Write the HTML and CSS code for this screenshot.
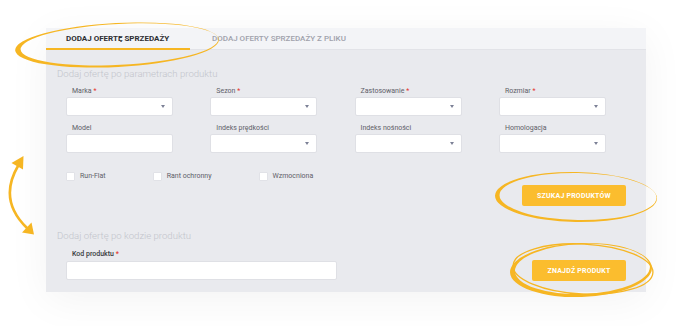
FILE: index.html
```html
<!DOCTYPE html>
<html lang="pl">
<head>
<meta charset="utf-8">
<title>Dodaj ofertę</title>
<link rel="stylesheet" href="styles.css">
</head>
<body>
<div class="page">
  <div class="panel">
    <div class="tabs">
      <div class="tab active">DODAJ OFERTĘ SPRZEDAŻY</div>
      <div class="tab">DODAJ OFERTY SPRZEDAŻY Z PLIKU</div>
    </div>
    <div class="panel-body">
      <h2 class="section-title">Dodaj ofertę po parametrach produktu</h2>
      <div class="fields">
        <div class="field"><label class="lbl">Marka <span class="req">*</span></label><div class="select"></div></div>
        <div class="field"><label class="lbl">Sezon <span class="req">*</span></label><div class="select"></div></div>
        <div class="field"><label class="lbl">Zastosowanie <span class="req">*</span></label><div class="select"></div></div>
        <div class="field"><label class="lbl">Rozmiar <span class="req">*</span></label><div class="select"></div></div>
        <div class="field"><label class="lbl">Model</label><div class="input"></div></div>
        <div class="field"><label class="lbl">Indeks prędkości</label><div class="select"></div></div>
        <div class="field"><label class="lbl">Indeks nośności</label><div class="select"></div></div>
        <div class="field"><label class="lbl">Homologacja</label><div class="select"></div></div>
      </div>
      <div class="checks">
        <div class="check"><span class="box"></span><span>Run-Flat</span></div>
        <div class="check"><span class="box"></span><span>Rant ochronny</span></div>
        <div class="check"><span class="box"></span><span>Wzmocniona</span></div>
      </div>
      <div class="actions"><button class="btn btn-search">SZUKAJ PRODUKTÓW</button></div>
      <h2 class="section-title second">Dodaj ofertę po kodzie produktu</h2>
      <div class="code-row">
        <div class="field code"><label class="lbl strong">Kod produktu <span class="req">*</span></label><div class="input"></div></div>
        <button class="btn btn-find">ZNAJDŹ PRODUKT</button>
      </div>
    </div>
  </div>
  <svg class="marks" width="677" height="326" viewBox="0 0 677 326">
    <g fill="#f6b623" fill-rule="evenodd">
      <path transform="rotate(-3 117 45)" d="M15,45 a102,22 0 1,0 204,0 a102,22 0 1,0 -204,0Z M20.5,44.5 a99,20.5 0 1,0 198,0 a99,20.5 0 1,0 -198,0Z"/>
      <path transform="rotate(1 576 197)" d="M495,197 a81,25 0 1,0 162,0 a81,25 0 1,0 -162,0Z M499.5,196.5 a78.5,23.5 0 1,0 157,0 a78.5,23.5 0 1,0 -157,0Z"/>
      <path transform="rotate(-2 581 270)" d="M510,270 a71,27 0 1,0 142,0 a71,27 0 1,0 -142,0Z M515,269 a67.5,25 0 1,0 135,0 a67.5,25 0 1,0 -135,0Z"/>
    </g>
    <ellipse cx="583" cy="269" rx="70" ry="25" transform="rotate(3 583 269)" fill="none" stroke="#f6b623" stroke-width="1.3"/>
    <g stroke="#f6b623" fill="none" stroke-width="2.6" stroke-linecap="round">
      <path d="M18,166 Q-2,200 27,228"/>
    </g>
    <g fill="#f6b623">
      <polygon points="23.5,156 11.5,163 23,169.5"/>
      <polygon points="34,234.5 22,232.5 31.5,222.5"/>
    </g>
  </svg>
</div>
</body>
</html>
```
FILE: styles.css
```css
* { box-sizing: border-box; }
html, body { margin: 0; padding: 0; background: #ffffff; }
body {
  width: 677px;
  height: 326px;
  overflow: hidden;
  font-family: Roboto, "Liberation Sans", sans-serif;
}
.page {
  position: relative;
  width: 677px;
  height: 326px;
  padding: 28px 0 0 46px;
}
.panel {
  width: 600px;
  background: #e9eaee;
  box-shadow: 0 8px 40px rgba(0, 0, 0, 0.05);
}
.tabs {
  display: flex;
  height: 22px;
  background: #f3f4f7;
  box-shadow: inset 0 -1px 0 #e2e3e8;
}
.tab {
  height: 22px;
  line-height: 22px;
  padding: 0 20px 0 22px;
  font-size: 8px;
  font-weight: 500;
  color: #9fa1ab;
  white-space: nowrap;
}
.tab.active {
  width: 144px;
  padding-left: 20px;
  padding-right: 0;
  color: #2e2f33;
  font-weight: 700;
  box-shadow: inset 0 -2px 0 #f6b623;
}
.panel-body {
  padding: 18px 20px 12px 11px;
}
.section-title {
  margin: 0;
  font-size: 9.6px;
  line-height: 12px;
  font-weight: 300;
  color: #c2c4cb;
}
.section-title.second { margin-top: 24px; }
.fields {
  margin-top: 7px;
  padding-left: 9px;
  display: grid;
  grid-template-columns: repeat(4, 107px);
  column-gap: 37.3px;
  row-gap: 8px;
}
.lbl {
  display: block;
  height: 9px;
  line-height: 9px;
  padding-left: 6px;
  margin-bottom: 1px;
  font-size: 7px;
  color: #5e6068;
}
.lbl.strong { color: #3a3b40; font-weight: 500; margin-bottom: 2px; }
.req { color: #e5322d; }
.select, .input {
  height: 19px;
  background: #ffffff;
  border: 1px solid #dfe0e5;
  border-radius: 2px;
}
.select {
  display: flex;
  align-items: center;
  justify-content: flex-end;
  padding-right: 7px;
}
.select::after {
  content: "";
  border-left: 2.5px solid transparent;
  border-right: 2.5px solid transparent;
  border-top: 3px solid #7c8196;
}
.checks {
  margin-top: 19px;
  padding-left: 9px;
  display: flex;
  gap: 47px;
}
.check {
  display: flex;
  align-items: center;
  gap: 5px;
  font-size: 7px;
  line-height: 9px;
  color: #5e6068;
}
.box {
  width: 9px;
  height: 9px;
  background: #ffffff;
  border: 1px solid #e1e2e7;
  border-radius: 1px;
}
.actions {
  margin-top: 4px;
  display: flex;
  justify-content: flex-end;
}
.btn {
  height: 21px;
  border: none;
  border-radius: 2px;
  background: #fbbd2e;
  color: #ffffff;
  font-family: Roboto, "Liberation Sans", sans-serif;
  font-size: 7px;
  font-weight: 700;
  letter-spacing: 0.2px;
  padding: 0;
}
.btn-search { width: 104px; }
.btn-find { width: 94px; margin-bottom: -1px; }
.code-row {
  margin-top: 8px;
  padding-left: 9px;
  display: flex;
  justify-content: space-between;
  align-items: flex-end;
}
.field.code { width: 271px; }
.marks {
  position: absolute;
  left: 0;
  top: 0;
  pointer-events: none;
}
```
